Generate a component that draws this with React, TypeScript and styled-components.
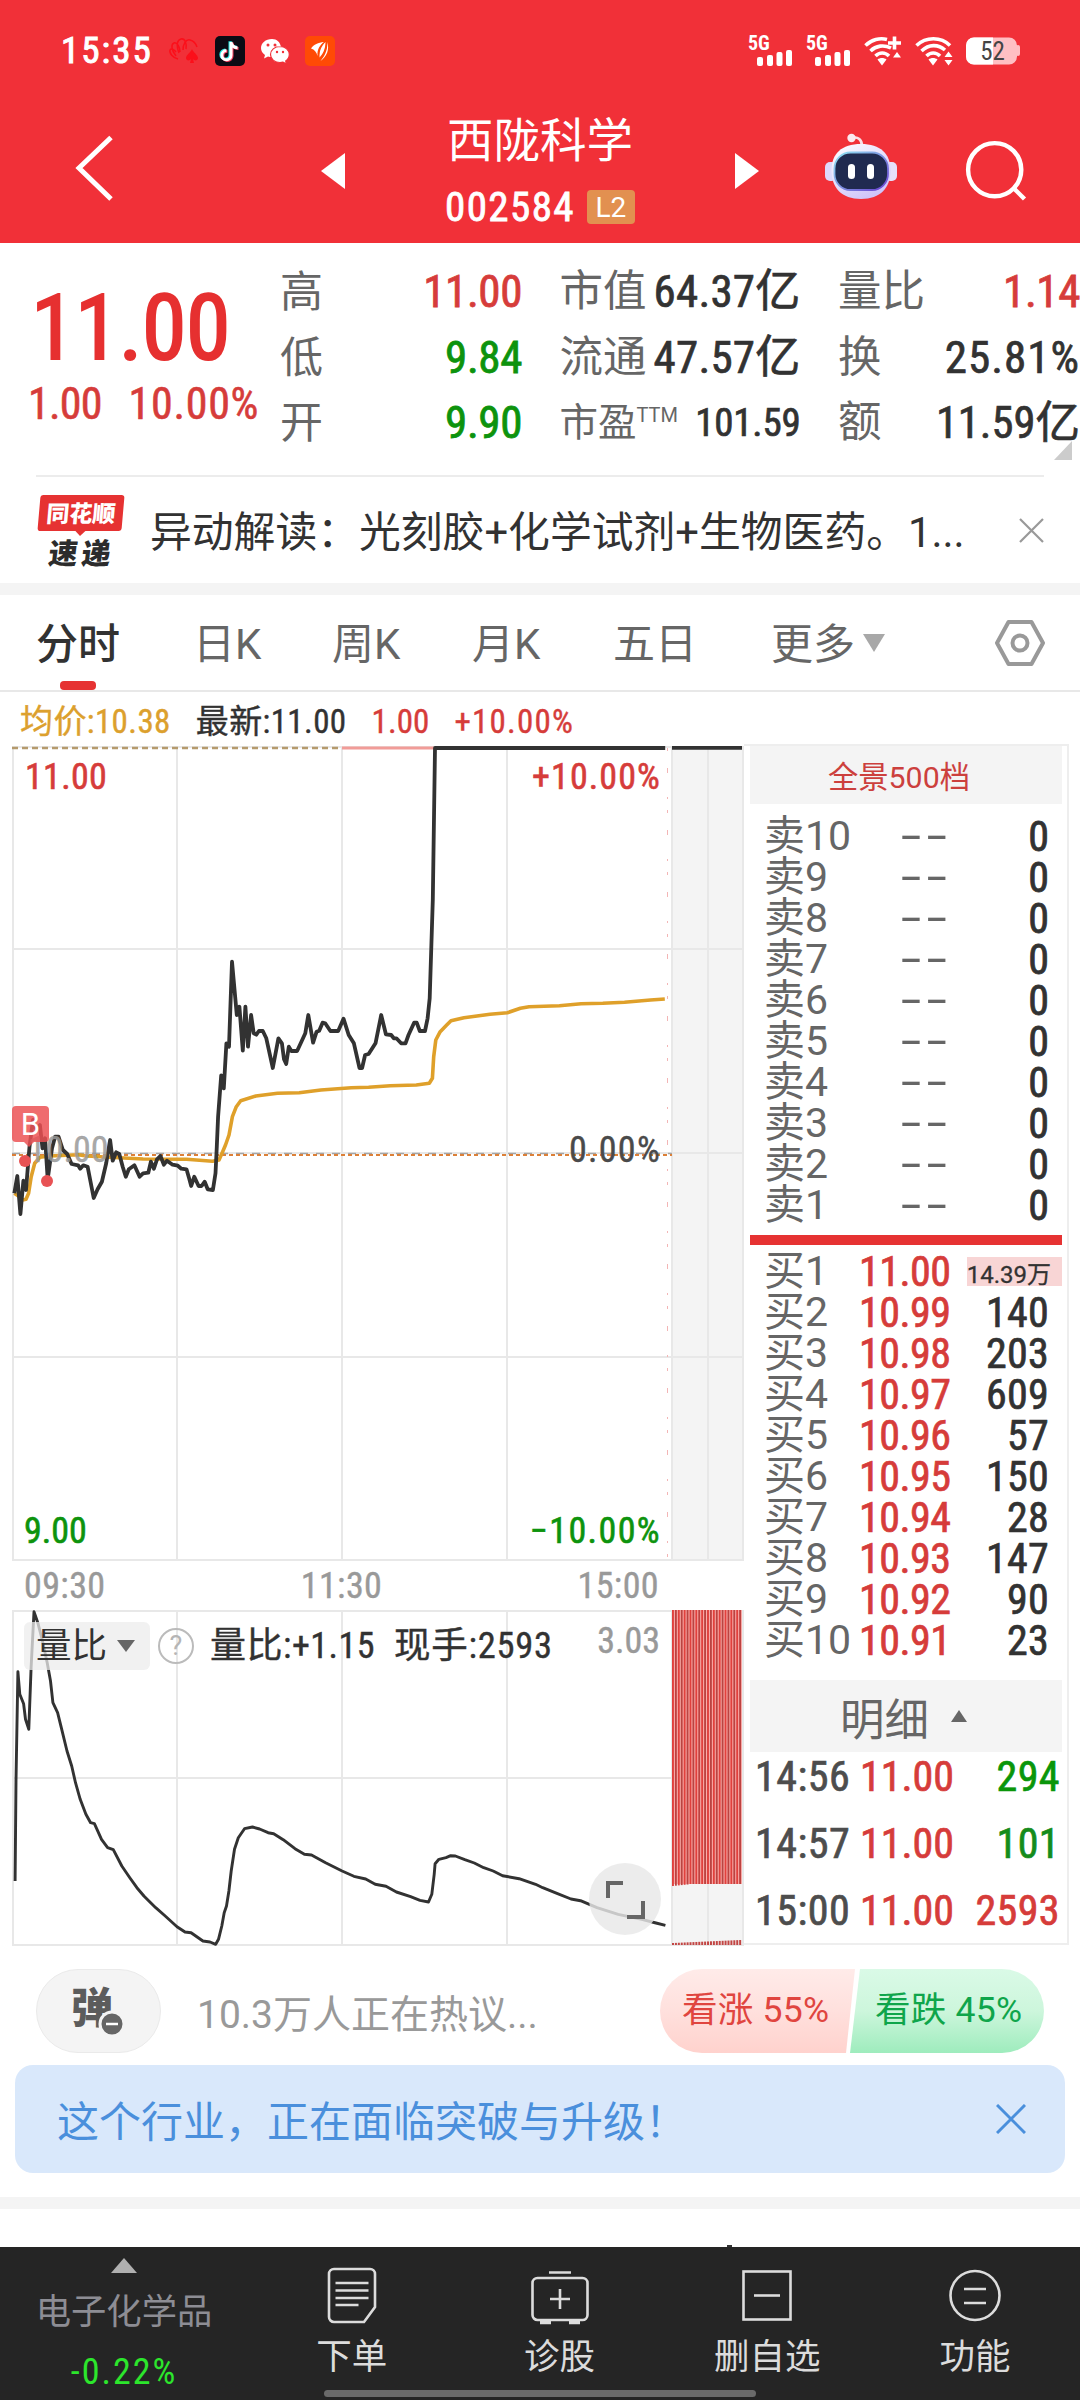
import React from "react";
import styled, { createGlobalStyle, css } from "styled-components";

const RED = "#d63c3a";
const GREEN = "#0d930d";
const INK = "#323232";
const MUTED = "#666666";
const PALE = "#999999";

const GlobalStyle = createGlobalStyle`
  html, body { margin: 0; padding: 0; background: #fff; }
  * { box-sizing: border-box; }
  body {
    width: 1080px;
    font-family: Roboto, "Noto Sans CJK SC", sans-serif;
    color: ${INK};
    -webkit-font-smoothing: antialiased;
  }
`;

const numeric = css`
  font-family: "Roboto Condensed", "Noto Sans CJK SC", sans-serif;
`;

const Screen = styled.div`
  width: 1080px;
  height: 2400px;
  overflow: hidden;
  display: flex;
  flex-direction: column;
  background: #fff;
`;

/* ---------- text ---------- */

interface TextProps {
  $size: number;
  $color?: string;
  $ls?: number;
  $heavy?: number;
}

const Label = styled.span<TextProps>`
  display: block;
  white-space: nowrap;
  font-size: ${(p) => p.$size}px;
  color: ${(p) => p.$color || INK};
  letter-spacing: ${(p) => p.$ls || 0}px;
  -webkit-text-stroke: ${(p) => p.$heavy || 0}px currentColor;
`;

const Num = styled(Label)`
  ${numeric}
`;

/* ---------- header ---------- */

const Header = styled.header`
  height: 243px;
  flex: none;
  background: #f13038;
  display: flex;
  flex-direction: column;
`;

const StatusBar = styled.div`
  height: 102px;
  padding: 0 60px 0 61px;
  display: flex;
  align-items: center;
  justify-content: space-between;
`;

const StatusGroup = styled.div<{ $gap: number }>`
  display: flex;
  align-items: center;
  gap: ${(p) => p.$gap}px;
  line-height: 36px;
`;

const Signal = styled.div`
  width: 45px;
  height: 30px;
  position: relative;
  svg { display: block; }
`;

const SignalTag = styled.span`
  ${numeric}
  position: absolute;
  left: 0;
  top: -3px;
  font-size: 20px;
  line-height: 20px;
  font-weight: 700;
  color: #fff;
`;

const TitleBar = styled.div`
  flex: 1;
  display: grid;
  grid-template-columns: 310px 460px 310px;
`;

const BackCell = styled.div`
  padding: 33px 0 0 73px;
`;

const TitleCell = styled.div`
  display: grid;
  grid-template-columns: 46px 1fr 46px;
`;

const ArrowCell = styled.div<{ $right?: boolean }>`
  padding-top: 51px;
  display: flex;
  justify-content: ${(p) => (p.$right ? "flex-start" : "flex-end")};
  padding-right: ${(p) => (p.$right ? 0 : 11)}px;
  padding-left: ${(p) => (p.$right ? 11 : 0)}px;
  svg { flex: none; }
`;

const StockTitle = styled.div`
  display: flex;
  flex-direction: column;
  align-items: center;
`;

const StockName = styled(Label)`
  margin-top: 11px;
  line-height: 56px;
`;

const CodeRow = styled.div`
  display: flex;
  align-items: center;
  gap: 12px;
  height: 36px;
  margin-top: 20px;
`;

const LevelBadge = styled.span`
  width: 48px;
  height: 34px;
  border-radius: 4px;
  background: #e29050;
  color: #fff;
  font-size: 28px;
  line-height: 35px;
  text-align: center;
`;

const ToolCell = styled.div`
  display: flex;
  gap: 64px;
  padding: 31px 0 0 55px;
`;

/* ---------- quote ---------- */

const Quote = styled.section`
  flex: none;
  height: 232px;
  display: flex;
  position: relative;
`;

const PriceBlock = styled.div`
  width: 280px;
  padding-left: 28px;
`;

const BigPrice = styled(Num)`
  margin-top: 35px;
  line-height: 102px;
  padding-left: 3px;
`;

const ChangeRow = styled.div`
  display: flex;
  gap: 27px;
  margin-top: 2px;
  line-height: 44px;
`;

const StatColumns = styled.div`
  flex: 1;
  padding-top: 16px;
  display: grid;
  grid-template-columns: 242px 241px 242px;
  column-gap: 37.5px;
`;

const StatColumn = styled.div`
  display: flex;
  flex-direction: column;
`;

const StatRow = styled.div`
  height: 65.5px;
  line-height: 66px;
  display: flex;
  justify-content: space-between;
  sup {
    font-size: 20px;
    line-height: 0;
    vertical-align: 14px;
  }
`;

const Corner = styled.i`
  position: absolute;
  right: 8px;
  bottom: 15px;
  border-left: 18px solid transparent;
  border-bottom: 19px solid #ccc;
`;

const NewsBar = styled.section`
  flex: none;
  height: 108px;
  margin: 0 36px;
  border-top: 2px solid #ececec;
  display: flex;
  align-items: center;
`;

const NewsText = styled(Label)`
  margin-left: 24px;
  flex: 1;
  line-height: 60px;
  margin-top: 5px;
`;

const Logo = styled.div`
  width: 90px;
  display: flex;
  flex-direction: column;
  align-items: center;
  margin-top: 2px;
`;

const LogoTop = styled.div`
  width: 84px;
  height: 36px;
  border-radius: 3px;
  background: #e63232;
  transform: skewX(-5deg);
  color: #fff;
  font: 900 23px/35px "Noto Sans CJK SC", sans-serif;
  text-align: center;
  position: relative;
  &::after {
    content: "";
    position: absolute;
    left: 37px;
    top: 35px;
    border: 6px solid transparent;
    border-top-color: #e63232;
  }
`;

const LogoBottom = styled.div`
  font: 900 29px/32px "Noto Sans CJK SC", sans-serif;
  transform: skewX(-7deg);
  letter-spacing: 4px;
  margin: 4px 0 0 2px;
  color: #2c2c2c;
`;

const Band = styled.div`
  flex: none;
  height: 12px;
  background: #f4f4f4;
`;

/* ---------- tabs ---------- */

const Tabs = styled.nav`
  flex: none;
  height: 97px;
  border-bottom: 2px solid #e8e8e8;
  padding: 0 35px 0 36px;
  display: flex;
  align-items: center;
  line-height: 60px;
`;

const Tab = styled.div<{ $w: number; $active?: boolean }>`
  width: ${(p) => p.$w}px;
  height: 97px;
  padding-top: 5px;
  line-height: 60px;
  font-size: 42px;
  white-space: nowrap;
  display: flex;
  align-items: center;
  gap: 8px;
  position: relative;
  color: ${(p) => (p.$active ? INK : MUTED)};
  font-weight: ${(p) => (p.$active ? 500 : 400)};
  i { margin-top: -5px; }
  ${(p) =>
    p.$active &&
    css`
      &::after {
        content: "";
        position: absolute;
        left: 24px;
        bottom: 1px;
        width: 36px;
        height: 9px;
        border-radius: 4px;
        background: #e63232;
      }
    `}
`;

const TabEnd = styled.div`
  margin-left: auto;
  display: flex;
`;

/* ---------- market area ---------- */

const Market = styled.section`
  flex: none;
  display: flex;
  height: 1253px;
`;

const ChartSide = styled.div`
  width: 744px;
  display: flex;
  flex-direction: column;
`;

const Legend = styled.div`
  height: 54px;
  line-height: 60px;
  padding-left: 20px;
  display: flex;
  gap: 25px;
`;

const Plot = styled.div<{ $h: number }>`
  position: relative;
  height: ${(p) => p.$h}px;
  > svg { display: block; }
`;

const Pin = styled.div<{ $x?: number; $r?: number; $y: number }>`
  position: absolute;
  top: ${(p) => p.$y}px;
  line-height: 40px;
  ${(p) => (p.$r !== undefined ? `right: ${p.$r}px;` : `left: ${p.$x}px;`)}
`;

const TimeAxis = styled.div`
  height: 49px;
  line-height: 51px;
  padding: 0 85px 0 24px;
  display: flex;
  justify-content: space-between;
`;

const IndicatorBar = styled.div`
  position: absolute;
  left: 24px;
  right: 84px;
  top: 12px;
  height: 48px;
  line-height: 48px;
  display: flex;
  align-items: center;
`;

const Picker = styled.div`
  width: 126px;
  height: 48px;
  border-radius: 6px;
  background: rgba(236, 236, 236, 0.75);
  display: flex;
  align-items: center;
  gap: 10px;
  padding-left: 12px;
`;

const HelpDot = styled.span`
  width: 36px;
  height: 36px;
  margin: 0 16px 0 8px;
  border: 2.5px solid #bbb;
  border-radius: 50%;
  color: #b5b5b5;
  font-size: 27px;
  line-height: 32px;
  text-align: center;
`;

const IndicatorValues = styled.div`
  display: flex;
  gap: 19px;
`;

const Expand = styled.div`
  position: absolute;
  left: 589px;
  top: 253px;
  width: 72px;
  height: 72px;
  border-radius: 50%;
  background: rgba(232, 232, 232, 0.82);
`;

const BuyFlag = styled.div`
  position: absolute;
  left: 12px;
  top: 360px;
  width: 37px;
  height: 36px;
  border-radius: 4px;
  background: rgba(236, 80, 82, 0.84);
  color: #fff;
  font-size: 31px;
  line-height: 37px;
  text-align: center;
  &::after {
    content: "";
    position: absolute;
    left: 12px;
    top: 36px;
    border: 5px solid transparent;
    border-top-color: rgba(236, 80, 82, 0.84);
  }
`;

/* ---------- order book ---------- */

const Book = styled.aside`
  margin-top: 52px;
  width: 325px;
  height: 1201px;
  padding: 0 5px 0 6px;
  border: 2px solid #eeeeee;
  border-left: 0;
  display: flex;
  flex-direction: column;
`;

const BookHead = styled.div<{ $h: number; $shift: number }>`
  height: ${(p) => p.$h}px;
  background: #f4f4f4;
  display: flex;
  align-items: center;
  justify-content: center;
  gap: 22px;
  padding-right: ${(p) => p.$shift}px;
  flex: none;
`;

const Levels = styled.div<{ $top: number }>`
  padding-top: ${(p) => p.$top}px;
  flex: none;
`;

const Level = styled.div`
  height: 41px;
  line-height: 41px;
  display: grid;
  grid-template-columns: 95px 92px 1fr;
  padding: 0 13px 0 14px;
  > :last-child { justify-self: end; }
`;

const Dashes = styled(Label)`
  margin-left: 42px;
  line-height: 40px;
  transform: scaleX(1.65);
  transform-origin: left;
`;

const VolTag = styled.div`
  width: 95px;
  height: 29px;
  margin: 6px -13px 0 0;
  padding-right: 11px;
  background: #f8d5d5;
  line-height: 36px;
  display: flex;
  justify-content: flex-end;
`;

const Separator = styled.div`
  height: 10px;
  flex: none;
  margin-top: 9px;
  background: #e63232;
`;

const Trade = styled.div`
  flex: none;
  height: 66.8px;
  line-height: 50px;
  display: grid;
  grid-template-columns: 105px 100px 1fr;
  padding: 0 2px 0 5px;
  > :last-child { justify-self: end; }
`;

const TradeList = styled.div`
  flex: 1;
  min-height: 0;
`;

const UpMark = styled.i<{ $w: number; $h: number; $c: string }>`
  border: ${(p) => p.$w / 2}px solid transparent;
  border-top: 0;
  border-bottom: ${(p) => p.$h}px solid ${(p) => p.$c};
`;

const DownMark = styled.i<{ $w: number; $h: number; $c: string }>`
  border: ${(p) => p.$w / 2}px solid transparent;
  border-bottom: 0;
  border-top: ${(p) => p.$h}px solid ${(p) => p.$c};
`;

/* ---------- below the chart ---------- */

const Discuss = styled.section`
  flex: none;
  height: 120px;
  padding: 24px 36px 0;
  display: flex;
`;

const DanmuPill = styled.div`
  width: 125px;
  height: 84px;
  border-radius: 42px;
  background: #f4f4f4;
  border: 1px solid #eaeaea;
  padding: 10px 0 0 34px;
  position: relative;
  color: #5c5c5c;
  font: 900 42px/50px "Noto Sans CJK SC", sans-serif;
  svg {
    position: absolute;
    left: 60px;
    top: 39px;
  }
`;

const DiscussText = styled(Label)`
  margin-left: 36px;
  line-height: 92px;
  flex: 1;
`;

const Vote = styled.div`
  width: 384px;
  height: 84px;
  border-radius: 42px;
  overflow: hidden;
  display: flex;
`;

const VoteSide = styled.div<{ $down?: boolean }>`
  flex: none;
  width: ${(p) => (p.$down ? 194 : 195)}px;
  margin-left: ${(p) => (p.$down ? -5 : 0)}px;
  padding-left: ${(p) => (p.$down ? 25 : 22)}px;
  font-size: 35.6px;
  line-height: 83px;
  white-space: nowrap;
  letter-spacing: 0.2px;
  color: ${(p) => (p.$down ? "#0fa54b" : "#e0453f")};
  background: ${(p) =>
    p.$down
      ? "linear-gradient(#dafae7, #cdf6dc 50%, #9eecbd)"
      : "linear-gradient(#ffebe9, #ffe0dd 50%, #ffd2cd)"};
  clip-path: ${(p) =>
    p.$down
      ? "polygon(10px 0, 100% 0, 100% 100%, 0 100%)"
      : "polygon(0 0, 100% 0, 186px 100%, 0 100%)"};
`;

const Banner = styled.section`
  flex: none;
  height: 108px;
  margin: 0 15px 24px;
  padding: 0 39px 0 42px;
  border-radius: 18px;
  background: #d9e8fb;
  display: flex;
  align-items: center;
  justify-content: space-between;
`;

const BannerText = styled(Label)`
  line-height: 60px;
  margin-top: 7px;
`;

const Gap = styled.div`
  flex: 1;
  position: relative;
  &::after {
    content: "";
    position: absolute;
    left: 727px;
    bottom: 0;
    width: 5px;
    height: 2px;
    background: #333;
  }
`;

/* ---------- bottom bar ---------- */

const Bottom = styled.footer`
  flex: none;
  height: 153px;
  background: #252525;
  display: grid;
  grid-template-columns: 248px repeat(4, 207.7px);
  position: relative;
`;

const Sector = styled.div`
  display: flex;
  flex-direction: column;
  align-items: center;
  padding-top: 11px;
`;

const SectorName = styled(Label)`
  line-height: 50px;
  margin-top: 14px;
`;

const SectorChange = styled(Num)`
  line-height: 50px;
  margin-top: 10px;
`;

const NavItem = styled.div`
  display: flex;
  flex-direction: column;
  align-items: center;
  padding-top: 18px;
  color: #dcdcdc;
  font-size: 35.5px;
  line-height: 56px;
  svg { margin-bottom: 4px; display: block; }
`;

const HomeBar = styled.div`
  position: absolute;
  left: 324px;
  top: 143px;
  width: 432px;
  height: 7px;
  border-radius: 4px;
  background: #6a6a6a;
`;

/* ---------- data ---------- */

type Pt = [number, number];

const parse = (s: string): Pt[] =>
  s.trim().split(/\s+/).map((p) => p.split(",").map(Number) as Pt);

const project = (s: string, kx: number, ky: number, dy: number) =>
  parse(s)
    .map(([x, y]) => `${(x / kx).toFixed(1)},${(y / ky + dy).toFixed(1)}`)
    .join(" ");

const PRICE = `33,880 40,828 47,942 54,842 60,870 68,740 76,660 84,690 92,675 98,745 104,715 110,838 120,745 127,710
135,710 145,750 155,762 165,792 180,796 185,806 192,796 202,800 216,894 225,868 235,845 245,790 254,720 260,782
268,757 275,762 283,800 290,830 297,808 310,796 322,830 330,820 342,818 348,785 355,806 362,778 370,768 378,794
385,782 398,794 410,797 418,806 430,808 436,835 441,858 448,830 458,858 465,858 472,845 479,868 491,870 497,820
500,740 503,650 510,526 516,565 522,430 528,440 535,185 546,345 552,320 560,452 566,320 572,440 579,345 585,400
591,404 597,393 606,393 614,415 629,504 642,415 650,430 655,478 660,492 666,440 672,453 685,453 695,425 704,400
711,345 722,428 730,395 736,392 744,368 750,370 762,393 780,393 792,356 804,405 816,430 829,504 835,504 842,465
850,462 866,430 879,345 890,403 902,405 908,415 914,415 925,430 935,430 942,405 955,368 961,368 968,393 980,393
986,355 991,295 998,0 1003,-456 1534,-456`;

const AVERAGE = `33,880 45,890 52,900 60,898 66,880 72,830 80,790 92,772 115,768 180,764 200,768 275,773 330,777
430,778 490,784 505,780 512,760 520,735 528,705 536,650 545,620 555,602 590,588 640,580 690,578 740,570 810,563
850,562 900,557 960,555 990,550 997,535 1000,470 1005,420 1015,395 1030,375 1040,362 1070,353 1130,343 1170,338
1200,325 1220,320 1290,317 1340,311 1390,310 1440,307 1500,300 1533,297`;

const RATIO = `32,1200 34,900 38,572 42,640 50,668 54,715 61,745 66,560 72,392 80,425 90,480 100,545 107,600 112,665
122,695 130,740 142,810 152,855 160,905 170,955 182,1000 192,1025 200,1028 215,1075 228,1100 240,1106 258,1155
275,1190 290,1220 305,1245 330,1280 350,1305 375,1337 392,1353 405,1355 430,1380 445,1383 457,1390 463,1375
470,1335 475,1295 480,1275 485,1230 490,1170 497,1105 505,1070 518,1043 535,1038 550,1044 568,1055 580,1058
600,1076 625,1103 645,1120 660,1122 690,1145 725,1170 750,1186 775,1194 795,1210 818,1216 840,1233 870,1247
890,1258 908,1263 915,1240 920,1180 922,1148 930,1135 945,1130 955,1124 965,1125 985,1136 1005,1146 1025,1160
1045,1170 1065,1184 1100,1193 1135,1210 1150,1220 1180,1237 1210,1254 1230,1259 1265,1280 1310,1300 1360,1315
1390,1326 1410,1333`;

const SELLS = [10, 9, 8, 7, 6, 5, 4, 3, 2, 1];
const BUYS: [string, string][] = [
  ["11.00", "14.39万"],
  ["10.99", "140"],
  ["10.98", "203"],
  ["10.97", "609"],
  ["10.96", "57"],
  ["10.95", "150"],
  ["10.94", "28"],
  ["10.93", "147"],
  ["10.92", "90"],
  ["10.91", "23"],
];
const TRADES: [string, string, string, string][] = [
  ["14:56", "11.00", "294", "#0a960a"],
  ["14:57", "11.00", "101", "#158c1c"],
  ["15:00", "11.00", "2593", RED],
];

/* ---------- drawings ---------- */

const CasinoIcon = () => (
  <svg width="32" height="30" viewBox="0 0 32 30" fill="none" stroke="#fb0f1a" strokeWidth="1.5">
    <path d="M10 23c-5-1-9-6-8-9 1-2 4-1 6 2M8 20C3 14 3 8 6 7s6 4 6 9M11 17C8 9 9 4 13 3s6 5 5 10M15 14c0-6 3-11 7-10s6 4 7 7" />
    <path d="M24 13c1 3 6 6 6 9 0 3-4 3-5 1l1 4h-4l1-4c-1 2-5 2-5-1 0-3 5-6 6-9z" fill="#fb0f1a" stroke="none" />
  </svg>
);

const NOTE = "M16 6v13.2a4.6 4.6 0 1 1-4.6-4.6M16 6c.5 3.600 3 5.600 6.500 5.800";

const TikTokIcon = () => (
  <svg width="30" height="30" viewBox="0 0 30 30">
    <rect width="30" height="30" rx="5" fill="#0b0b14" />
    <g fill="none" strokeWidth="3">
      <path d={NOTE} stroke="#25e6e0" transform="translate(-1 -.7)" />
      <path d={NOTE} stroke="#f4405f" transform="translate(1 .7)" />
      <path d={NOTE} stroke="#fff" />
    </g>
  </svg>
);

const WeChatIcon = () => (
  <svg width="30" height="30" viewBox="0 0 30 30">
    <path d="M12 3C5.500 3 1 7 1 12c0 3 1.500 5.300 4 7l-1 3.500 4-2c1.300.4 2.600.6 4 .6h9V11C20 6 17 3 12 3z" fill="#fff" />
    <path d="M20 10.500c-5.500 0-9.500 3.600-9.500 8s4 8 9.500 8c1 0 2-.1 3-.4l3.500 1.900-.8-3c2.200-1.500 3.600-3.800 3.600-6.500 0-4.400-4-8-9.300-8z" fill="#fff" stroke="#f13038" strokeWidth="1.200" />
    <g fill="#f13038">
      <circle cx="8" cy="9" r="1.500" /><circle cx="15" cy="9" r="1.500" />
      <circle cx="17" cy="16" r="1.200" /><circle cx="23" cy="16" r="1.200" />
    </g>
  </svg>
);

const FeatherIcon = () => (
  <svg width="30" height="30" viewBox="0 0 30 30">
    <rect width="30" height="30" rx="5" fill="#ff4a05" />
    <g fill="#fff">
      <path d="M6 12.500C9 8.500 13 6.500 19 6c-4 3-7 7-6.500 14C11.500 16 9.500 13.500 6 12.500z" />
      <path d="M20.500 6c-4 4-6.500 9-6 15.500 3.500-3.500 6-9 6-15.500z" />
      <path d="M22 6c1 6-1 12.500-6.500 19C21.500 21 25 13 22 6z" />
    </g>
    <path d="M20 5.500c-4.500 4-6.800 9-6.300 15.500M21.500 5.500c0 7-2 12-6 17" fill="none" stroke="#ff4a05" strokeWidth="1" />
  </svg>
);

const SignalIcon = () => (
  <Signal>
    <svg width="45" height="30" viewBox="0 0 45 30" fill="#fff">
      <rect x="9" y="21" width="6" height="9" rx="2" />
      <rect x="19" y="19" width="6" height="11" rx="2" />
      <rect x="28.500" y="16" width="6" height="14" rx="2" />
      <rect x="38" y="14" width="6" height="16" rx="2" />
    </svg>
    <SignalTag>5G</SignalTag>
  </Signal>
);

const WifiIcon = ({ plus }: { plus?: boolean }) => (
  <svg width="38" height="30" viewBox="0 0 38 30" fill="none" stroke="#fff" strokeWidth="3.600">
    <path d={plus ? "M1.500 9.500C7.500 3.500 16 1.500 23 3.500" : "M1.500 9.500C11 .5 26 .5 35 9.500"} />
    <path d={plus ? "M6.500 15C12 9.500 20 8.500 27 12" : "M6.500 15C14 8 23 8 30 14"} />
    <path d="M11.500 20C15.500 16 21 16 25 20" />
    <path d="M13.500 23.500L18 29.500l4.500-6c-2.500-2-6.500-2-9 0z" fill="#fff" stroke="none" />
    {plus ? (
      <>
        <path d="M24 7h13M30.500 .5v13" />
        <path d="M29 21.500l4-5.500 4 5.500z" fill="#fff" stroke="none" />
      </>
    ) : (
      <path d="M29.500 21l4-5.500 4 5.500zM29.500 24l4 5.500 4-5.500z" fill="#fff" stroke="none" />
    )}
  </svg>
);

const BatteryIcon = () => (
  <svg width="54" height="28" viewBox="0 0 54 28">
    <path d="M8 .5h35a8 8 0 0 1 8 8v11a8 8 0 0 1-8 8H8a8 8 0 0 1-8-8v-11a8 8 0 0 1 8-8z" fill="#ffbfc3" />
    <rect x="50" y="8" width="4" height="11" rx="2" fill="#ffbfc3" />
    <path d="M8 .5h19v27H8a8 8 0 0 1-8-8v-11a8 8 0 0 1 8-8z" fill="#fff" />
    <text x="26.500" y="22.500" fontFamily="Roboto Condensed" fontSize="25" textAnchor="middle" fill="#444">52</text>
  </svg>
);

const RobotIcon = () => (
  <svg width="74" height="68" viewBox="0 0 74 68">
    <defs>
      <linearGradient id="shell" x1="0" y1="0" x2="0.600" y2="1">
        <stop offset="0" stopColor="#fff" /><stop offset="1" stopColor="#cfc5fa" />
      </linearGradient>
      <linearGradient id="rim" x1="0" y1="0" x2="1" y2="1">
        <stop offset="0" stopColor="#8fe4f2" /><stop offset="1" stopColor="#6a3fd0" />
      </linearGradient>
    </defs>
    <path d="M27 5c6-2 10 2 10 8" fill="none" stroke="#f9dfe6" strokeWidth="2.600" />
    <circle cx="26.500" cy="5" r="4.200" fill="#fbe9ef" />
    <rect x="0" y="29" width="12" height="19" rx="5" fill="#ded9fb" />
    <rect x="60" y="29" width="12" height="19" rx="5" fill="#e6e0fb" />
    <path d="M36 11c19.500 0 29.500 9.500 29.500 26.500S55.500 66 36 66 6.500 54.500 6.500 37.500 16.500 11 36 11z" fill="url(#shell)" />
    <rect x="9.500" y="19.500" width="53.500" height="37.500" rx="16" fill="#202a50" stroke="url(#rim)" strokeWidth="1.800" />
    <rect x="23" y="31" width="7" height="15" rx="3.500" fill="#fff" />
    <rect x="42" y="31" width="7" height="15" rx="3.500" fill="#fff" />
  </svg>
);

const SearchIcon = () => (
  <svg width="68" height="70" viewBox="0 0 68 70" fill="none" stroke="#fff" strokeWidth="4.400">
    <circle cx="31.700" cy="36.700" r="26.600" />
    <path d="M50 54.500l11.500 11.500" />
  </svg>
);

const Cross = ({ size, color, w }: { size: number; color: string; w: number }) => (
  <svg width={size} height={size} stroke={color} strokeWidth={w}>
    <path d={`M1 1L${size - 1} ${size - 1}M${size - 1} 1L1 ${size - 1}`} />
  </svg>
);

const PriceChart = () => (
  <svg width="744" height="815" viewBox="0 746 744 815" fill="none">
    <rect x="671" y="746" width="73" height="815" fill="#f4f4f4" />
    <g stroke="#e8e8e8" strokeWidth="2">
      <path d="M12 747H744M12 949H744M12 1153H744M12 1357H744M12 1560H744" />
      <path d="M13 746V1561M177 746V1561M342 746V1561M507 746V1561M672 746V1561M708 746V1561M743 746V1561" />
    </g>
    <path d="M667.500 748V1560" stroke="#f3b5b5" strokeWidth="1" strokeDasharray="3 17 5 24 2 11" />
    <path d="M12 748H342" stroke="#b59a6d" strokeWidth="2.500" strokeDasharray="6 4" />
    <path d="M342 748H434" stroke="#f19c98" strokeWidth="3" />
    <path d="M12 1153.500H672" stroke="#a5a5a5" strokeWidth="1.500" strokeDasharray="8 8" />
    <path d="M12 1155H672" stroke="#dc8038" strokeWidth="2" strokeDasharray="4 3" />
    <polyline points={project(AVERAGE, 2.306, 3, 900)} stroke="#dfa02a" strokeWidth="3.600" strokeLinejoin="round" />
    <polyline points={project(PRICE, 2.306, 3, 900)} stroke="#323232" strokeWidth="3.800" strokeLinejoin="round" />
    <path d="M672 747.500H742" stroke="#323232" strokeWidth="4.500" />
    <circle cx="25" cy="1161" r="6" fill="#e85254" />
    <circle cx="47" cy="1181" r="6" fill="#e85254" />
  </svg>
);

const bars = Array.from({ length: 24 }, (_, i) => i);

const RatioChart = () => (
  <svg width="744" height="336" viewBox="0 1609 744 336" fill="none">
    <rect x="671" y="1609" width="73" height="336" fill="#f4f4f4" />
    <g stroke="#e8e8e8" strokeWidth="2">
      <path d="M12 1610H744M12 1777H672M12 1944H744" />
      <path d="M13 1609V1945M177 1609V1945M342 1609V1945M507 1609V1945M672 1609V1945M708 1609V1945M743 1609V1945" />
    </g>
    <rect x="672" y="1609" width="70" height="274" fill="#fbb0ad" />
    {bars.map((i) => (
      <React.Fragment key={i}>
        <rect x={672 + i * 2.92} y="1609" width="1.900" height={i < 6 ? 276 - i * 0.3 : 274} fill={i % 2 ? "#bb4341" : "#e0403d"} />
        <rect x={672 + i * 2.92} y={1942 - i * 0.13} width="2" height={2 + i * 0.13} fill="#c24644" />
      </React.Fragment>
    ))}
    <polyline points={project(RATIO, 2.119, 3, 1480)} stroke="#323232" strokeWidth="2.900" strokeLinejoin="round" />
  </svg>
);

/* ---------- page ---------- */

export default function App() {
  return (
    <Screen>
      <GlobalStyle />
      <Header>
        <StatusBar>
          <StatusGroup $gap={15}>
            <Num $size={37} $color="#fff" $heavy={1} $ls={2}>15:35</Num>
            <CasinoIcon />
            <TikTokIcon />
            <WeChatIcon />
            <FeatherIcon />
          </StatusGroup>
          <StatusGroup $gap={13}>
            <SignalIcon />
            <SignalIcon />
            <WifiIcon plus />
            <WifiIcon />
            <BatteryIcon />
          </StatusGroup>
        </StatusBar>
        <TitleBar>
          <BackCell>
            <svg width="42" height="66" fill="none" stroke="#fff" strokeWidth="5">
              <path d="M38 2.500L6 33l32 31" />
            </svg>
          </BackCell>
          <TitleCell>
            <ArrowCell>
              <svg width="24" height="36"><path d="M24 0v36L0 18z" fill="#fff" /></svg>
            </ArrowCell>
            <StockTitle>
              <StockName $size={46.5} $color="#fff">西陇科学</StockName>
              <CodeRow>
                <Num $size={41} $color="#fff" $heavy={0.8} $ls={1.4}>002584</Num>
                <LevelBadge>L2</LevelBadge>
              </CodeRow>
            </StockTitle>
            <ArrowCell $right>
              <svg width="24" height="36"><path d="M0 0v36l24-18z" fill="#fff" /></svg>
            </ArrowCell>
          </TitleCell>
          <ToolCell>
            <RobotIcon />
            <SearchIcon />
          </ToolCell>
        </TitleBar>
      </Header>

      <Quote>
        <PriceBlock>
          <BigPrice $size={90} $color="#e63030" $heavy={2} $ls={-0.5}>11.00</BigPrice>
          <ChangeRow>
            <Num $size={44} $color={RED} $heavy={0.6} $ls={-0.8}>1.00</Num>
            <Num $size={44} $color={RED} $heavy={0.6} $ls={0.7}>10.00%</Num>
          </ChangeRow>
        </PriceBlock>
        <StatColumns>
          <StatColumn>
            <StatRow>
              <Label $size={43} $color={MUTED}>高</Label>
              <Num $size={45} $color={RED} $heavy={0.8} $ls={-0.4}>11.00</Num>
            </StatRow>
            <StatRow>
              <Label $size={43} $color={MUTED}>低</Label>
              <Num $size={45} $color={GREEN} $heavy={0.8} $ls={-0.4}>9.84</Num>
            </StatRow>
            <StatRow>
              <Label $size={43} $color={MUTED}>开</Label>
              <Num $size={45} $color={GREEN} $heavy={0.8} $ls={-0.4}>9.90</Num>
            </StatRow>
          </StatColumn>
          <StatColumn>
            <StatRow>
              <Label $size={43.5} $color={MUTED}>市值</Label>
              <Num $size={45} $heavy={0.7} $ls={0.2}>64.37亿</Num>
            </StatRow>
            <StatRow>
              <Label $size={43.5} $color={MUTED}>流通</Label>
              <Num $size={45} $heavy={0.7} $ls={0.2}>47.57亿</Num>
            </StatRow>
            <StatRow>
              <Label $size={38.5} $color={MUTED}>市盈<sup>TTM</sup></Label>
              <Num $size={39} $heavy={0.7} $ls={-0.2}>101.59</Num>
            </StatRow>
          </StatColumn>
          <StatColumn>
            <StatRow>
              <Label $size={43.5} $color={MUTED}>量比</Label>
              <Num $size={45} $color={RED} $heavy={0.8} $ls={-0.4}>1.14</Num>
            </StatRow>
            <StatRow>
              <Label $size={43.5} $color={MUTED}>换</Label>
              <Num $size={45} $heavy={0.7} $ls={1}>25.81%</Num>
            </StatRow>
            <StatRow>
              <Label $size={43.5} $color={MUTED}>额</Label>
              <Num $size={44.5} $heavy={0.7}>11.59亿</Num>
            </StatRow>
          </StatColumn>
        </StatColumns>
        <Corner />
      </Quote>

      <NewsBar>
        <Logo>
          <LogoTop>同花顺</LogoTop>
          <LogoBottom>速递</LogoBottom>
        </Logo>
        <NewsText $size={41.8}>异动解读：光刻胶+化学试剂+生物医药。1...</NewsText>
        <Cross size={25} color="#999" w={2.2} />
      </NewsBar>
      <Band />

      <Tabs>
        <Tab $w={157} $active>分时</Tab>
        <Tab $w={139}>日K</Tab>
        <Tab $w={140}>周K</Tab>
        <Tab $w={141}>月K</Tab>
        <Tab $w={158}>五日</Tab>
        <Tab $w={120}>更多<DownMark $w={22} $h={18} $c="#a8a8a8" /></Tab>
        <TabEnd>
          <svg width="50" height="48" viewBox="0 0 50 48" fill="none" stroke="#999" strokeWidth="4" strokeLinejoin="round">
            <path d="M13.500 3h23l11.500 21-11.500 21h-23L2 24z" />
            <circle cx="25" cy="24" r="7.500" />
          </svg>
        </TabEnd>
      </Tabs>

      <Market>
        <ChartSide>
          <Legend>
            <Num $size={33} $color="#dca02d" $heavy={0.4} $ls={0.4}>均价:10.38</Num>
            <Num $size={33} $heavy={0.4} $ls={0.4}>最新:11.00</Num>
            <Num $size={33} $color={RED} $heavy={0.4} $ls={0.1}>1.00</Num>
            <Num $size={33} $color={RED} $heavy={0.4} $ls={1.2}>+10.00%</Num>
          </Legend>
          <Plot $h={815}>
            <PriceChart />
            <Pin $x={25} $y={11}><Num $size={36} $color={RED} $heavy={0.6} $ls={0.3}>11.00</Num></Pin>
            <Pin $r={83} $y={11}><Num $size={36} $color={RED} $heavy={0.6} $ls={1.1}>+10.00%</Num></Pin>
            <Pin $x={28} $y={384}><Num $size={36} $color="#999999d9" $heavy={0.4}>10.00</Num></Pin>
            <Pin $r={83} $y={384}><Num $size={36} $color="#4a4a4a" $heavy={0.4} $ls={1.3}>0.00%</Num></Pin>
            <Pin $x={24} $y={765}><Num $size={36} $color={GREEN} $heavy={0.6}>9.00</Num></Pin>
            <Pin $r={83} $y={765}><Num $size={36} $color={GREEN} $heavy={0.6} $ls={1.4}>−10.00%</Num></Pin>
            <BuyFlag>B</BuyFlag>
          </Plot>
          <TimeAxis>
            <Num $size={36} $color={PALE} $heavy={0.4} $ls={0.4}>09:30</Num>
            <Num $size={36} $color={PALE} $heavy={0.4} $ls={0.4}>11:30</Num>
            <Num $size={36} $color={PALE} $heavy={0.4} $ls={0.4}>15:00</Num>
          </TimeAxis>
          <Plot $h={336}>
            <RatioChart />
            <IndicatorBar>
              <Picker>
                <Label $size={35.5}>量比</Label>
                <DownMark $w={18} $h={12} $c="#666" />
              </Picker>
              <HelpDot>?</HelpDot>
              <IndicatorValues>
                <Num $size={36} $heavy={0.4} $ls={0.5}>量比:+1.15</Num>
                <Num $size={36.5} $heavy={0.4} $ls={0.7}>现手:2593</Num>
              </IndicatorValues>
            </IndicatorBar>
            <Pin $r={84} $y={11}><Num $size={36} $color={PALE} $heavy={0.4}>3.03</Num></Pin>
            <Expand>
              <svg width="72" height="72" fill="none" stroke="#666" strokeWidth="4">
                <path d="M34 20H19v15M38 54h16V38" />
              </svg>
            </Expand>
          </Plot>
        </ChartSide>

        <Book>
          <BookHead $h={58} $shift={14}>
            <Label $size={30.3} $color="#cc403d">全景500档</Label>
          </BookHead>
          <Levels $top={12}>
            {SELLS.map((n) => (
              <Level key={n}>
                <Label $size={41} $color={MUTED}>卖{n}</Label>
                <Dashes $size={44} $color={MUTED} $ls={3.4}>--</Dashes>
                <Num $size={42} $heavy={0.8}>0</Num>
              </Level>
            ))}
          </Levels>
          <Separator />
          <Levels $top={6}>
            {BUYS.map(([price, vol], i) => (
              <Level key={price}>
                <Label $size={41} $color={MUTED}>买{i + 1}</Label>
                <Num $size={42} $color={RED} $heavy={0.7} $ls={-0.5}>{price}</Num>
                {i === 0 ? (
                  <VolTag><Label $size={24} $heavy={0.3}>{vol}</Label></VolTag>
                ) : (
                  <Num $size={42} $heavy={0.7} $ls={0.3}>{vol}</Num>
                )}
              </Level>
            ))}
          </Levels>
          <Levels $top={19}>
            <BookHead $h={72} $shift={5}>
              <Label $size={44.5} $color={MUTED}>明细</Label>
              <UpMark $w={17} $h={12} $c="#666" />
            </BookHead>
          </Levels>
          <TradeList>
            {TRADES.map(([time, price, vol, color]) => (
              <Trade key={time}>
                <Num $size={42} $color="#4d4d4d" $heavy={0.7} $ls={0.5}>{time}</Num>
                <Num $size={42} $color={RED} $heavy={0.7}>{price}</Num>
                <Num $size={42} $color={color} $heavy={0.7} $ls={0.4}>{vol}</Num>
              </Trade>
            ))}
          </TradeList>
        </Book>
      </Market>

      <Discuss>
        <DanmuPill>
          弹
          <svg width="30" height="30" viewBox="0 0 30 30">
            <circle cx="15" cy="15" r="12" fill="#666" stroke="#f4f4f4" strokeWidth="3" />
            <path d="M9 15h12" stroke="#fff" strokeWidth="2.500" />
          </svg>
        </DanmuPill>
        <DiscussText $size={39} $color={PALE}>10.3万人正在热议...</DiscussText>
        <Vote>
          <VoteSide>看涨 55%</VoteSide>
          <VoteSide $down>看跌 45%</VoteSide>
        </Vote>
      </Discuss>

      <Banner>
        <BannerText $size={42} $color="#4a8fdc">这个行业，正在面临突破与升级！</BannerText>
        <Cross size={30} color="#4a8fdc" w={3} />
      </Banner>
      <Band />
      <Gap />

      <Bottom>
        <Sector>
          <UpMark $w={26} $h={15} $c="#b0b0b0" />
          <SectorName $size={35.3} $color="#8d8d94">电子化学品</SectorName>
          <SectorChange $size={36} $color="#2ce62c" $ls={2}>-0.22%</SectorChange>
        </Sector>
        <NavItem>
          <svg width="50" height="60" viewBox="0 0 50 60" fill="none" stroke="#dcdcdc" strokeWidth="2.600">
            <path d="M7 4h36a5 5 0 0 1 5 5v33L37 57H7a5 5 0 0 1-5-5V9a5 5 0 0 1 5-5z" />
            <path d="M8.500 18h33M8.500 25.500h33M8.500 33h33M8.500 40h23" />
          </svg>
          下单
        </NavItem>
        <NavItem>
          <svg width="58" height="60" viewBox="0 0 58 60" fill="none" stroke="#dcdcdc" strokeWidth="2.600">
            <rect x="1.500" y="13" width="55" height="42" rx="5" />
            <path d="M18 7.500h22M29 24v20M19 34h20" />
            <path d="M9 57.500h11M38 57.500h11" strokeWidth="3.500" />
          </svg>
          诊股
        </NavItem>
        <NavItem>
          <svg width="50" height="60" viewBox="0 0 50 60" fill="none" stroke="#dcdcdc" strokeWidth="2.600">
            <rect x="1.500" y="6.500" width="47" height="48" />
            <path d="M12 30.500h26" />
          </svg>
          删自选
        </NavItem>
        <NavItem>
          <svg width="52" height="60" viewBox="0 0 52 60" fill="none" stroke="#dcdcdc" strokeWidth="2.600">
            <circle cx="26" cy="30.500" r="24.500" />
            <path d="M15 24h22M15 38h22" />
          </svg>
          功能
        </NavItem>
        <HomeBar />
      </Bottom>
    </Screen>
  );
}
